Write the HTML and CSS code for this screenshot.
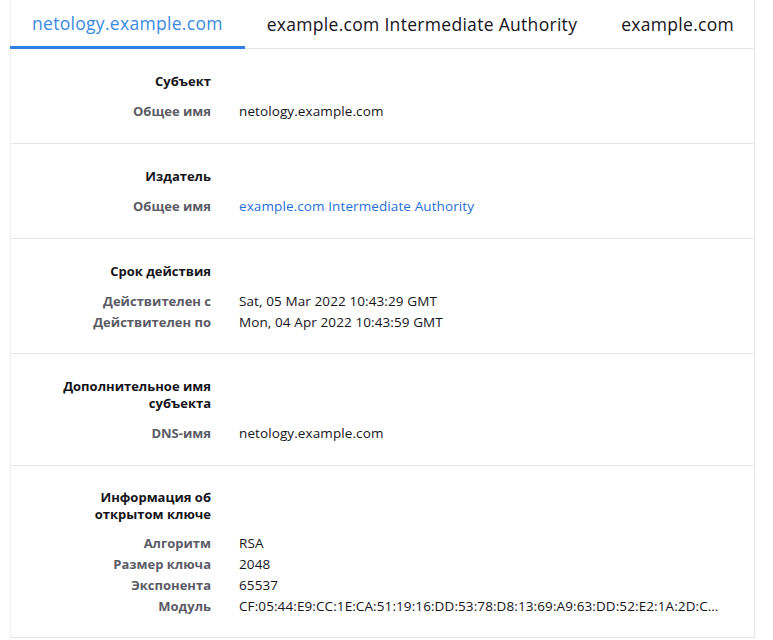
FILE: index.html
```html
<!DOCTYPE html>
<html lang="ru">
<head>
<meta charset="utf-8">
<title>Сертификат</title>
<link rel="stylesheet" href="styles.css">
</head>
<body>
<div class="card">
  <nav class="tabs">
    <div class="tab active">netology.example.com</div>
    <div class="tab">example.com Intermediate Authority</div>
    <div class="tab">example.com</div>
  </nav>

  <section class="group">
    <div class="title">Субъект</div><div></div>
    <div class="label first">Общее имя</div><div class="value first">netology.example.com</div>
  </section>

  <section class="group">
    <div class="title">Издатель</div><div></div>
    <div class="label first">Общее имя</div><div class="value first link">example.com Intermediate Authority</div>
  </section>

  <section class="group short">
    <div class="title">Срок действия</div><div></div>
    <div class="label first">Действителен с</div><div class="value first">Sat, 05 Mar 2022 10:43:29 GMT</div>
    <div class="label">Действителен по</div><div class="value">Mon, 04 Apr 2022 10:43:59 GMT</div>
  </section>

  <section class="group">
    <div class="title">Дополнительное имя субъекта</div><div></div>
    <div class="label first">DNS-имя</div><div class="value first">netology.example.com</div>
  </section>

  <section class="group tight">
    <div class="title">Информация об открытом ключе</div><div></div>
    <div class="label first">Алгоритм</div><div class="value first">RSA</div>
    <div class="label">Размер ключа</div><div class="value">2048</div>
    <div class="label">Экспонента</div><div class="value">65537</div>
    <div class="label">Модуль</div><div class="value">CF:05:44:E9:CC:1E:CA:51:19:16:DD:53:78:D8:13:69:A9:63:DD:52:E2:1A:2D:CB:7F:31:0A:44:9E:12:6B:D0:88</div>
  </section>
</div>
</body>
</html>
```

FILE: styles.css
```css
html, body {
  margin: 0;
  padding: 0;
  background: #ffffff;
}

body {
  font-family: "Open Sans", "Noto Sans", sans-serif;
  color: #15141a;
  padding: 0 16px 0 10px;
}

.card {
  border-left: 1px solid #f1f1f3;
  border-right: 1px solid #e6e6ea;
  width: 745px;
  box-sizing: border-box;
}

.tabs {
  display: flex;
  height: 49px;
  box-sizing: border-box;
  border-bottom: 1px solid #e6e6ea;
  margin-left: -1px;
}

.tab {
  padding: 0 22px;
  height: 49px;
  box-sizing: border-box;
  display: flex;
  align-items: center;
  font-size: 17.5px;
  letter-spacing: 0.3px;
  color: #15141a;
  white-space: nowrap;
  padding-bottom: 2px;
}

.tab.active {
  color: #3a8ae2;
  border-bottom: 3px solid #2f80e4;
  padding-bottom: 0;
  margin-bottom: -1px;
  height: 49px;
}

.group {
  display: grid;
  grid-template-columns: 160px minmax(0, 1fr);
  column-gap: 28px;
  padding: 24px 34px 21px 40px;
  border-bottom: 1px solid #e6e6ea;
}

.group.short {
  padding-bottom: 20px;
}

.group.tight {
  padding-top: 23px;
  padding-bottom: 20px;
}

.title {
  font-size: 13px;
  font-weight: 700;
  line-height: 17px;
  text-align: right;
  color: #15141a;
}

.label {
  font-size: 13px;
  font-weight: 700;
  line-height: 21px;
  text-align: right;
  color: #5b5b66;
  white-space: nowrap;
}

.value {
  font-size: 13.5px;
  letter-spacing: 0.1px;
  line-height: 21px;
  color: #15141a;
  white-space: nowrap;
  overflow: hidden;
  text-overflow: ellipsis;
}

.first {
  margin-top: 11px;
}

.tight .first {
  margin-top: 10px;
}

.link {
  color: #1f6fd6;
}
```
